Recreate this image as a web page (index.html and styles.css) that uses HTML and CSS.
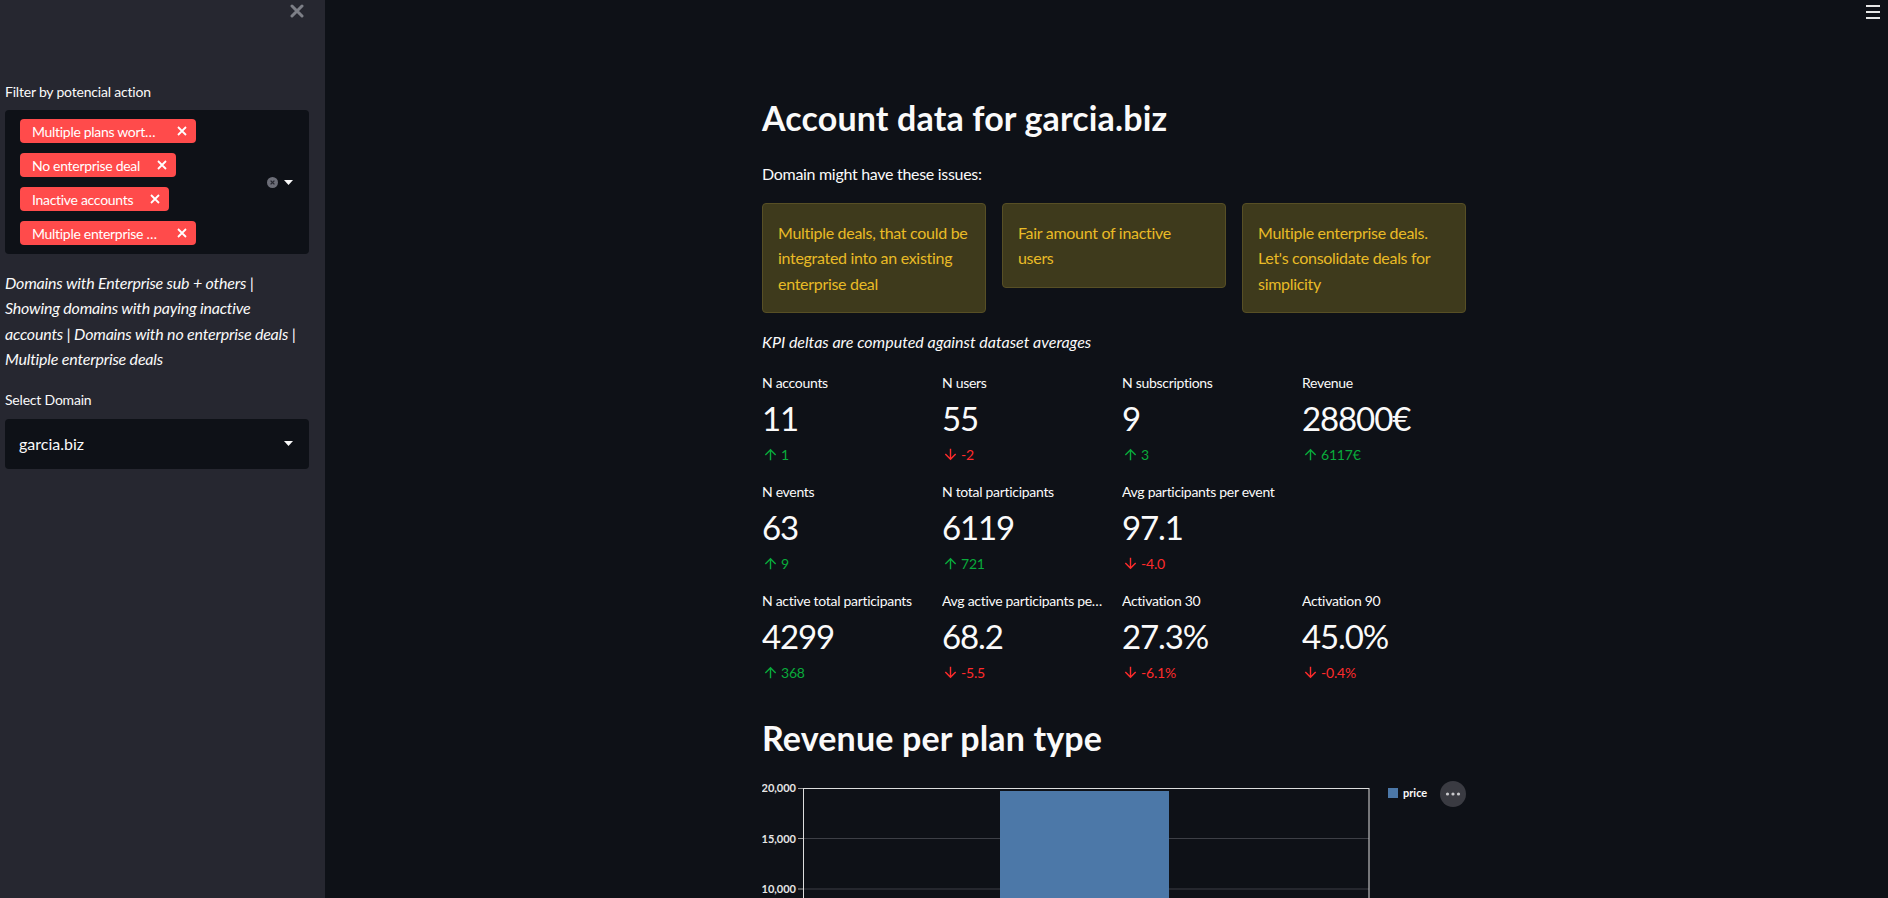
FILE: index.html
```html
<!DOCTYPE html>
<html lang="en">
<head>
<meta charset="utf-8">
<title>Account data for garcia.biz</title>
<link rel="stylesheet" href="styles.css">
</head>
<body>
<div class="app">
  <aside class="sidebar">
    <div class="sidebar-top">
      <button class="close-btn" aria-label="Close sidebar">
        <svg width="14" height="14" viewBox="0 0 14 14"><path d="M2 2L12 12M12 2L2 12" stroke="#7d7f87" stroke-width="3" stroke-linecap="round"/></svg>
      </button>
    </div>
    <label class="widget-label">Filter by potencial action</label>
    <div class="multiselect">
      <div class="tags">
        <span class="tag"><span class="tag-text trunc">Multiple plans wort…</span><svg class="tag-x" width="12" height="12" viewBox="0 0 12 12"><path d="M2 2L10 10M10 2L2 10" stroke="#fff" stroke-width="1.8"/></svg></span>
        <span class="tag"><span class="tag-text">No enterprise deal</span><svg class="tag-x" width="12" height="12" viewBox="0 0 12 12"><path d="M2 2L10 10M10 2L2 10" stroke="#fff" stroke-width="1.8"/></svg></span>
        <span class="tag"><span class="tag-text">Inactive accounts</span><svg class="tag-x" width="12" height="12" viewBox="0 0 12 12"><path d="M2 2L10 10M10 2L2 10" stroke="#fff" stroke-width="1.8"/></svg></span>
        <span class="tag"><span class="tag-text trunc">Multiple enterprise …</span><svg class="tag-x" width="12" height="12" viewBox="0 0 12 12"><path d="M2 2L10 10M10 2L2 10" stroke="#fff" stroke-width="1.8"/></svg></span>
      </div>
      <div class="ms-controls">
        <svg width="11" height="11" viewBox="0 0 11 11"><circle cx="5.5" cy="5.5" r="5.5" fill="#6c6e78"/><path d="M3.6 3.6L7.4 7.4M7.4 3.6L3.6 7.4" stroke="#262730" stroke-width="1.3"/></svg>
        <svg width="9" height="5" viewBox="0 0 9 5"><path d="M0 0H9L4.5 5Z" fill="#fafafa"/></svg>
      </div>
    </div>
    <p class="side-note">Domains with Enterprise sub + others | Showing domains with paying inactive accounts | Domains with no enterprise deals | Multiple enterprise deals</p>
    <label class="widget-label select-label">Select Domain</label>
    <div class="selectbox">
      <span>garcia.biz</span>
      <svg width="9" height="5" viewBox="0 0 9 5"><path d="M0 0H9L4.5 5Z" fill="#fafafa"/></svg>
    </div>
  </aside>
  <main class="main">
    <button class="menu-btn" aria-label="Menu">
      <span></span><span></span><span></span>
    </button>
    <div class="block">
      <h1 class="title">Account data for garcia.biz</h1>
      <p class="text">Domain might have these issues:</p>
      <div class="cards">
        <div class="card">Multiple deals, that could be integrated into an existing enterprise deal</div>
        <div class="card">Fair amount of inactive users</div>
        <div class="card">Multiple enterprise deals. Let's consolidate deals for simplicity</div>
      </div>
      <p class="text italic kpi-note">KPI deltas are computed against dataset averages</p>
      <div class="metrics">
        <div class="metric"><div class="m-label">N accounts</div><div class="m-value">11</div><div class="m-delta up"><svg viewBox="0 0 24 24"><path d="M4 12l1.41 1.41L11 7.83V20h2V7.83l5.58 5.59L20 12l-8-8-8 8z"/></svg>1</div></div>
        <div class="metric"><div class="m-label">N users</div><div class="m-value">55</div><div class="m-delta down"><svg viewBox="0 0 24 24"><path d="M20 12l-1.41-1.41L13 16.17V4h-2v12.17l-5.58-5.59L4 12l8 8 8-8z"/></svg>-2</div></div>
        <div class="metric"><div class="m-label">N subscriptions</div><div class="m-value">9</div><div class="m-delta up"><svg viewBox="0 0 24 24"><path d="M4 12l1.41 1.41L11 7.83V20h2V7.83l5.58 5.59L20 12l-8-8-8 8z"/></svg>3</div></div>
        <div class="metric"><div class="m-label">Revenue</div><div class="m-value">28800€</div><div class="m-delta up"><svg viewBox="0 0 24 24"><path d="M4 12l1.41 1.41L11 7.83V20h2V7.83l5.58 5.59L20 12l-8-8-8 8z"/></svg>6117€</div></div>

        <div class="metric"><div class="m-label">N events</div><div class="m-value">63</div><div class="m-delta up"><svg viewBox="0 0 24 24"><path d="M4 12l1.41 1.41L11 7.83V20h2V7.83l5.58 5.59L20 12l-8-8-8 8z"/></svg>9</div></div>
        <div class="metric"><div class="m-label">N total participants</div><div class="m-value">6119</div><div class="m-delta up"><svg viewBox="0 0 24 24"><path d="M4 12l1.41 1.41L11 7.83V20h2V7.83l5.58 5.59L20 12l-8-8-8 8z"/></svg>721</div></div>
        <div class="metric"><div class="m-label">Avg participants per event</div><div class="m-value">97.1</div><div class="m-delta down"><svg viewBox="0 0 24 24"><path d="M20 12l-1.41-1.41L13 16.17V4h-2v12.17l-5.58-5.59L4 12l8 8 8-8z"/></svg>-4.0</div></div>
        <div class="metric empty"></div>

        <div class="metric"><div class="m-label">N active total participants</div><div class="m-value">4299</div><div class="m-delta up"><svg viewBox="0 0 24 24"><path d="M4 12l1.41 1.41L11 7.83V20h2V7.83l5.58 5.59L20 12l-8-8-8 8z"/></svg>368</div></div>
        <div class="metric"><div class="m-label">Avg active participants pe…</div><div class="m-value">68.2</div><div class="m-delta down"><svg viewBox="0 0 24 24"><path d="M20 12l-1.41-1.41L13 16.17V4h-2v12.17l-5.58-5.59L4 12l8 8 8-8z"/></svg>-5.5</div></div>
        <div class="metric"><div class="m-label">Activation 30</div><div class="m-value">27.3%</div><div class="m-delta down"><svg viewBox="0 0 24 24"><path d="M20 12l-1.41-1.41L13 16.17V4h-2v12.17l-5.58-5.59L4 12l8 8 8-8z"/></svg>-6.1%</div></div>
        <div class="metric"><div class="m-label">Activation 90</div><div class="m-value">45.0%</div><div class="m-delta down"><svg viewBox="0 0 24 24"><path d="M20 12l-1.41-1.41L13 16.17V4h-2v12.17l-5.58-5.59L4 12l8 8 8-8z"/></svg>-0.4%</div></div>
      </div>
      <h2 class="title h2">Revenue per plan type</h2>
      <div class="chart">
        <svg class="chart-svg" width="704" height="230" viewBox="0 0 704 230">
          <g class="axis-text" font-size="11" fill="#e6e6e6" text-anchor="end">
            <text x="34" y="13">20,000</text>
            <text x="34" y="63.5">15,000</text>
            <text x="34" y="114">10,000</text>
            <text x="34" y="164.5">5,000</text>
            <text x="34" y="215">0</text>
          </g>
          <g stroke="#3d3f46" stroke-width="1">
            <line x1="41" y1="59.5" x2="607" y2="59.5"/>
            <line x1="41" y1="110" x2="607" y2="110"/>
            <line x1="41" y1="160.5" x2="607" y2="160.5"/>
          </g>
          <g stroke="#9a9a9a" stroke-width="1">
            <line x1="36" y1="9.5" x2="41" y2="9.5"/>
            <line x1="36" y1="59.5" x2="41" y2="59.5"/>
            <line x1="36" y1="110" x2="41" y2="110"/>
            <line x1="36" y1="160.5" x2="41" y2="160.5"/>
          </g>
          <rect x="238" y="12" width="169" height="199" fill="#4c78a8"/>
          <rect x="41.5" y="9.5" width="565.5" height="202" fill="none" stroke="#dddddd" stroke-width="1"/>
          <rect x="626" y="9" width="10" height="10" fill="#4c78a8"/>
          <text x="641" y="18" font-size="11" fill="#fafafa" class="axis-text">price</text>
          <circle cx="691" cy="15" r="13" fill="#3a3b42"/>
          <circle cx="685.5" cy="15" r="1.6" fill="#c9c9cc"/>
          <circle cx="691" cy="15" r="1.6" fill="#c9c9cc"/>
          <circle cx="696.5" cy="15" r="1.6" fill="#c9c9cc"/>
        </svg>
      </div>
    </div>
  </main>
</div>
</body>
</html>
```

FILE: styles.css
```css
* {
  box-sizing: border-box;
}

html, body {
  margin: 0;
  padding: 0;
  height: 100%;
  overflow: hidden;
  background: #0e1117;
}

body {
  font-family: "Lato", "Noto Sans", sans-serif;
  color: #fafafa;
}

.app {
  display: flex;
  height: 898px;
}

.sidebar {
  width: 325px;
  flex: 0 0 325px;
  background: #262730;
  padding: 0 16px 0 5px;
  display: flex;
  flex-direction: column;
}

.sidebar-top {
  height: 82px;
  display: flex;
  justify-content: flex-end;
  align-items: flex-start;
}

.close-btn {
  background: none;
  border: 0;
  padding: 0;
  margin: 4px 5px 0 0;
  width: 14px;
  height: 14px;
  display: flex;
}

.widget-label {
  font-size: 14px;
  line-height: 20px;
  height: 20px;
  color: #fafafa;
  letter-spacing: -0.2px;
}

.multiselect {
  margin-top: 8px;
  background: #0e1117;
  border-radius: 4px;
  height: 144px;
  padding: 9px 16px 9px 15px;
  display: flex;
  align-items: center;
}

.tags {
  flex: 1;
  display: flex;
  flex-direction: column;
  align-items: flex-start;
  gap: 10px;
  align-self: flex-start;
}

.tag {
  height: 24px;
  background: #ff4b4b;
  border-radius: 4px;
  color: #fff;
  font-size: 14px;
  display: inline-flex;
  align-items: center;
  padding: 0 8px 0 12px;
}

.tag-text {
  white-space: nowrap;
  letter-spacing: -0.3px;
}

.tag-text.trunc {
  width: 128px;
  overflow: hidden;
}

.tag-x {
  margin-left: 16px;
}

.ms-controls {
  display: flex;
  align-items: center;
  gap: 6px;
}

.side-note {
  margin: 16px 0 0 0;
  font-style: italic;
  font-size: 16px;
  line-height: 25.4px;
  color: #fafafa;
  letter-spacing: -0.2px;
}

.select-label {
  margin-top: 18px;
}

.selectbox {
  margin-top: 9px;
  height: 50px;
  background: #0e1117;
  border-radius: 4px;
  display: flex;
  align-items: center;
  justify-content: space-between;
  padding: 0 16px 0 14px;
  font-size: 16px;
}

.main {
  flex: 1;
  position: relative;
  padding-left: 15px;
  display: flex;
  justify-content: center;
}

.menu-btn {
  position: absolute;
  top: 5px;
  right: 8px;
  width: 14px;
  height: 14px;
  background: none;
  border: 0;
  padding: 0;
  display: flex;
  flex-direction: column;
  justify-content: space-between;
}

.menu-btn span {
  display: block;
  height: 2px;
  width: 14px;
  background: #e6e6e6;
}

.block {
  width: 704px;
  padding-top: 96px;
}

.title {
  margin: 0;
  font-size: 34px;
  line-height: 43px;
  font-weight: 700;
  letter-spacing: 0.15px;
  color: #fafafa;
}

.text {
  margin: 22px 0 0 0;
  font-size: 16px;
  line-height: 25.6px;
  letter-spacing: -0.3px;
}

.italic {
  font-style: italic;
  letter-spacing: 0;
}

.cards {
  margin-top: 16px;
  display: grid;
  grid-template-columns: repeat(3, 1fr);
  gap: 16px;
  align-items: start;
}

.card {
  background: #3e3a1c;
  border: 1px solid #574f25;
  border-radius: 4px;
  padding: 16px 15px;
  color: #e9bb26;
  font-size: 16px;
  line-height: 25.6px;
  letter-spacing: -0.3px;
}

.kpi-note {
  margin-top: 16px;
}

.metrics {
  margin-top: 16px;
  display: grid;
  grid-template-columns: repeat(4, 1fr);
  column-gap: 16px;
  row-gap: 11px;
}

.metric {
  height: 98px;
  min-width: 0;
}

.m-label {
  font-size: 14px;
  line-height: 24px;
  height: 24px;
  white-space: nowrap;
  overflow: hidden;
  letter-spacing: -0.3px;
}

.m-value {
  font-size: 33px;
  line-height: 46px;
  height: 46px;
  letter-spacing: -1.1px;
}

.m-delta {
  font-size: 14px;
  line-height: 28px;
  display: flex;
  align-items: center;
  gap: 2px;
  letter-spacing: -0.2px;
}

.m-delta svg {
  width: 17px;
  height: 17px;
}

.m-delta.up {
  color: #09ab3b;
}

.m-delta.up svg {
  fill: #09ab3b;
}

.m-delta.down {
  color: #ff2b2b;
}

.m-delta.down svg {
  fill: #ff2b2b;
}

.h2 {
  margin-top: 29px;
}

.chart {
  margin-top: 20px;
}

.chart-svg {
  display: block;
}

.axis-text {
  font-family: "Lato", "Noto Sans", sans-serif;
  font-weight: 700;
}
```
